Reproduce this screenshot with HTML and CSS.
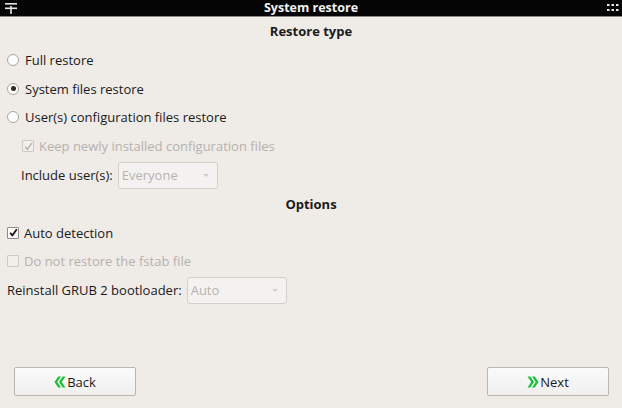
FILE: index.html
```html
<!DOCTYPE html>
<html>
<head>
<meta charset="utf-8">
<link rel="stylesheet" href="styles.css">
</head>
<body>
<div class="window">
  <div class="titlebar">
    <svg class="tb-left" width="12" height="12" viewBox="0 0 12 12"><rect x="0" y="1" width="12" height="1.6" fill="#e8e8e8"/><rect x="0" y="5.5" width="12" height="1.6" fill="#e8e8e8"/><rect x="5.2" y="4" width="1.6" height="8" fill="#e8e8e8"/></svg>
    <span class="title">System restore</span>
    <svg class="tb-right" width="12" height="10" viewBox="0 0 12 10"><g fill="#e8e8e8"><rect x="0" y="1" width="2.5" height="2"/><rect x="4.5" y="1" width="2.5" height="2"/><rect x="9" y="1" width="2.5" height="2"/><rect x="0" y="6" width="2.5" height="2"/><rect x="4.5" y="6" width="2.5" height="2"/><rect x="9" y="6" width="2.5" height="2"/></g></svg>
  </div>
  <div class="content">
    <div class="heading">Restore type</div>
    <div class="row radio-row"><span class="radio"></span><span>Full restore</span></div>
    <div class="row radio-row"><span class="radio checked"></span><span>System files restore</span></div>
    <div class="row radio-row"><span class="radio"></span><span>User(s) configuration files restore</span></div>
    <div class="row check-row indent disabled"><span class="check checked dis"><svg width="9" height="9" viewBox="0 0 9 9"><path d="M1.2 4.8 L3.4 7.4 L7.8 1.2" fill="none" stroke="#b5b2ae" stroke-width="1.4"/></svg></span><span>Keep newly installed configuration files</span></div>
    <div class="row combo-row indent2"><span>Include user(s):</span><span class="combo c1"><span>Everyone</span><span class="arrow"></span></span></div>
    <div class="heading h2">Options</div>
    <div class="row check-row"><span class="check checked"><svg width="9" height="9" viewBox="0 0 9 9"><path d="M1.2 4.8 L3.4 7.4 L7.8 1.2" fill="none" stroke="#111" stroke-width="1.8"/></svg></span><span>Auto detection</span></div>
    <div class="row check-row disabled"><span class="check dis"></span><span>Do not restore the fstab file</span></div>
    <div class="row combo-row"><span>Reinstall GRUB 2 bootloader:</span><span class="combo c2"><span>Auto</span><span class="arrow"></span></span></div>
  </div>
  <div class="buttons">
    <button class="btn"><svg width="12" height="12" viewBox="0 0 12 12"><path d="M4.2 0.5 L0.5 6 L4.2 11.5 H7 L3.3 6 L7 0.5Z M8.7 0.5 L5 6 L8.7 11.5 H11.5 L7.8 6 L11.5 0.5Z" fill="#1bbf3a"/></svg><span>Back</span></button>
    <button class="btn"><svg width="12" height="12" viewBox="0 0 12 12"><path d="M0.5 0.5 L4.2 6 L0.5 11.5 H3.3 L7 6 L3.3 0.5Z M5 0.5 L8.7 6 L5 11.5 H7.8 L11.5 6 L7.8 0.5Z" fill="#1bbf3a"/></svg><span>Next</span></button>
  </div>
</div>
</body>
</html>
```
FILE: styles.css
```css
html, body { margin: 0; padding: 0; }
body {
  width: 622px; height: 408px; overflow: hidden;
  background: #efebe7;
  font-family: "Open Sans", "DejaVu Sans", sans-serif;
  font-size: 13px;
  color: #1a1a1a;
}
.window { display: flex; flex-direction: column; height: 408px; }
.titlebar {
  height: 16px; background: #050505; border-bottom: 1px solid #8a8886;
  display: flex; align-items: center; justify-content: space-between;
  padding: 0 3px 0 5px; position: relative;
}
.title {
  position: absolute; left: 0; right: 0; top: 0; text-align: center;
  color: #f2f2f2; font-weight: bold; font-size: 12.5px; line-height: 16px;
}
.tb-left, .tb-right { position: relative; z-index: 1; }
.content { display: flex; flex-direction: column; padding: 0 7px; }
.heading { text-align: center; font-weight: bold; height: 29px; line-height: 29px; }
.h2 { height: 29px; line-height: 29px; margin-top: 0; }
.row { display: flex; align-items: center; height: 28.5px; }
.radio-row { gap: 6px; }
.radio {
  width: 10px; height: 10px; border-radius: 50%;
  border: 1px solid #a9a6a2; background: #fdfdfc;
  box-sizing: content-box; display: flex; align-items: center; justify-content: center;
}
.radio.checked::after { content: ""; width: 5px; height: 5px; border-radius: 50%; background: #2a2a2a; }
.check-row { gap: 5px; }
.check {
  width: 10px; height: 10px; border: 1px solid #8e8b88; background: #fbfbfa;
  border-radius: 1px; display: flex; align-items: center; justify-content: center;
}
.check.dis { border-color: #cdc9c5; background: #f1eeeb; }
.indent { padding-left: 15px; height: 29px; }
.indent2 { padding-left: 14px; }
.disabled { color: #b5b2ae; }
.combo-row { gap: 5px; height: 29px; }
.combo {
  height: 27px; box-sizing: border-box;
  border: 1px solid #d3cfcb; border-radius: 3px; background: #f4f2f0;
  display: flex; align-items: center; justify-content: space-between;
  padding: 0 8px 0 3px; color: #b5b2ae;
}
.c1 { width: 100px; }
.c2 { width: 100px; }
.arrow { width: 0; height: 0; border-left: 3px solid transparent; border-right: 3px solid transparent; border-top: 3px solid #d0ccc8; }
.buttons {
  margin-top: auto; display: flex; justify-content: space-between;
  padding: 0 13px 12px 14px;
}
.btn {
  width: 122px; height: 29px; border: 1px solid #b9b6b2; border-radius: 2px;
  background: linear-gradient(#fbfbfb, #f0efee);
  display: flex; align-items: center; justify-content: center; gap: 1px;
  font-family: inherit; font-size: 13px; color: #1a1a1a; padding: 0;
}
```
